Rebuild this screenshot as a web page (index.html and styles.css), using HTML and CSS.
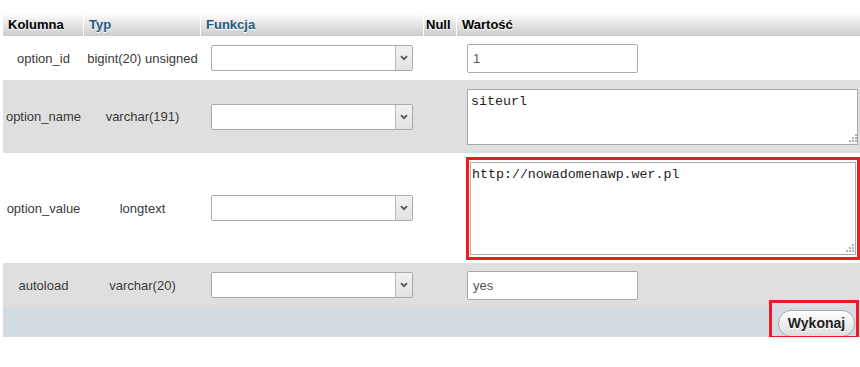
FILE: index.html
```html
<!DOCTYPE html>
<html lang="pl">
<head>
    <meta charset="UTF-8">
    <title>Edycja wiersza</title>
    <link rel="stylesheet" href="styles.css">
</head>
<body>
    <form class="insert-form">
        <table class="insert-table">
            <colgroup>
                <col class="col-name">
                <col class="col-type">
                <col class="col-func">
                <col class="col-null">
                <col class="col-value">
            </colgroup>
            <thead>
                <tr>
                    <th>Kolumna</th>
                    <th><a href="#">Typ</a></th>
                    <th><a href="#">Funkcja</a></th>
                    <th class="th-null">Null</th>
                    <th>Wartość</th>
                </tr>
            </thead>
            <tbody>
                <tr class="row-short">
                    <td class="name">option_id</td>
                    <td class="type">bigint(20) unsigned</td>
                    <td class="func">
                        <div class="fake-select">
                            <span class="fake-select-value"></span>
                            <span class="fake-select-arrow">
                                <svg width="8" height="6" viewBox="0 0 8 6"><path d="M1 1.2 L4 4.2 L7 1.2" fill="none" stroke="#555" stroke-width="1.8"/></svg>
                            </span>
                        </div>
                    </td>
                    <td></td>
                    <td class="value"><input type="text" class="text-input" value="1"></td>
                </tr>
                <tr class="even row-mid">
                    <td class="name">option_name</td>
                    <td class="type">varchar(191)</td>
                    <td class="func">
                        <div class="fake-select">
                            <span class="fake-select-value"></span>
                            <span class="fake-select-arrow">
                                <svg width="8" height="6" viewBox="0 0 8 6"><path d="M1 1.2 L4 4.2 L7 1.2" fill="none" stroke="#555" stroke-width="1.8"/></svg>
                            </span>
                        </div>
                    </td>
                    <td></td>
                    <td class="value">
                        <div class="area-wrap">
                            <textarea class="text-area area-small">siteurl</textarea>
                            <svg class="grip" width="8" height="8" viewBox="0 0 8 8"><rect x="6" y="0" width="2" height="2"/><rect x="3" y="3" width="2" height="2"/><rect x="6" y="3" width="2" height="2"/><rect x="0" y="6" width="2" height="2"/><rect x="3" y="6" width="2" height="2"/><rect x="6" y="6" width="2" height="2"/></svg>
                        </div>
                    </td>
                </tr>
                <tr class="row-tall">
                    <td class="name">option_value</td>
                    <td class="type">longtext</td>
                    <td class="func">
                        <div class="fake-select">
                            <span class="fake-select-value"></span>
                            <span class="fake-select-arrow">
                                <svg width="8" height="6" viewBox="0 0 8 6"><path d="M1 1.2 L4 4.2 L7 1.2" fill="none" stroke="#555" stroke-width="1.8"/></svg>
                            </span>
                        </div>
                    </td>
                    <td></td>
                    <td class="value value-marked">
                        <div class="marked">
                            <div class="area-wrap">
                                <textarea class="text-area area-big">http://nowadomenawp.wer.pl</textarea>
                                <svg class="grip" width="8" height="8" viewBox="0 0 8 8"><rect x="6" y="0" width="2" height="2"/><rect x="3" y="3" width="2" height="2"/><rect x="6" y="3" width="2" height="2"/><rect x="0" y="6" width="2" height="2"/><rect x="3" y="6" width="2" height="2"/><rect x="6" y="6" width="2" height="2"/></svg>
                            </div>
                        </div>
                    </td>
                </tr>
                <tr class="even row-short">
                    <td class="name">autoload</td>
                    <td class="type">varchar(20)</td>
                    <td class="func">
                        <div class="fake-select">
                            <span class="fake-select-value"></span>
                            <span class="fake-select-arrow">
                                <svg width="8" height="6" viewBox="0 0 8 6"><path d="M1 1.2 L4 4.2 L7 1.2" fill="none" stroke="#555" stroke-width="1.8"/></svg>
                            </span>
                        </div>
                    </td>
                    <td></td>
                    <td class="value"><input type="text" class="text-input" value="yes"></td>
                </tr>
            </tbody>
            <tfoot>
                <tr>
                    <td colspan="5" class="footer">
                        <button type="button" class="go-btn">Wykonaj</button>
                        <span class="mark-box"></span>
                    </td>
                </tr>
            </tfoot>
        </table>
    </form>
</body>
</html>
```

FILE: styles.css
```css
body {
    margin: 0;
    font-family: 'Liberation Sans', Arial, sans-serif;
    font-size: 13px;
    color: #3a3a3a;
    background: #fff;
}
.insert-form {
    padding: 13px 0 0 3px;
}
.insert-table {
    border-collapse: separate;
    border-spacing: 0;
    table-layout: fixed;
    width: 857px;
}
.col-name { width: 81px; }
.col-type { width: 117px; }
.col-func { width: 223px; }
.col-null { width: 33px; }
.col-value { width: 403px; }

th {
    height: 23px;
    padding: 0 5px;
    text-align: left;
    font-weight: bold;
    color: #000;
    background: linear-gradient(#fff, #ccc);
    border-right: 1px solid #fff;
    text-shadow: 0 1px 0 #fff;
    box-sizing: border-box;
}
th:last-child {
    border-right: none;
}
th.th-null {
    padding: 0 2px;
}
th a {
    color: #235a81;
    text-decoration: none;
}
td {
    padding: 0;
    vertical-align: middle;
}
tr.even td {
    background: #dfdfdf;
}
.row-short { height: 44px; }
.row-mid { height: 73px; }
.row-tall { height: 110px; }

.name, .type {
    text-align: center;
    white-space: nowrap;
}
.func {
    padding-left: 10px;
}
.fake-select {
    display: flex;
    width: 202px;
    height: 26px;
    box-sizing: border-box;
    border: 1px solid #aaa;
    border-radius: 2px;
    background: #fff;
}
.fake-select-value {
    flex: 1;
}
.fake-select-arrow {
    width: 16px;
    display: flex;
    align-items: center;
    justify-content: center;
    border-left: 1px solid #bbb;
    background: linear-gradient(#f2f2f2, #e2e2e2);
}
.value {
    padding-left: 10px;
}
.text-input {
    display: block;
    width: 171px;
    height: 29px;
    box-sizing: border-box;
    margin: 0;
    padding: 0 5px;
    border: 1px solid #aaa;
    border-radius: 2px;
    font-family: 'Liberation Sans', Arial, sans-serif;
    font-size: 13px;
    color: #555;
}
.area-wrap {
    position: relative;
    display: block;
}
.text-area {
    display: block;
    margin: 0;
    box-sizing: border-box;
    padding: 4px 3px;
    border: 1px solid #aaa;
    font-family: 'Liberation Mono', 'Courier New', monospace;
    font-size: 13.3px;
    line-height: 15px;
    color: #222;
    background: #fff;
    resize: none;
}
.area-small {
    width: 391px;
    height: 56px;
}
.value-marked {
    padding-left: 9px;
}
.marked {
    width: 394px;
    box-sizing: border-box;
    border: 3px solid #ed1c24;
    padding: 2px 0 2px 1px;
}
.area-big {
    width: 386px;
    height: 93px;
    padding-left: 1px;
}
.grip {
    position: absolute;
    right: 3px;
    bottom: 3px;
    fill: #b0b0b0;
}
.footer {
    position: relative;
    height: 30px;
    padding: 0 5px 0 0;
    text-align: right;
    background: #d3dce3;
}
.go-btn {
    width: 77px;
    height: 27px;
    margin-top: 2px;
    vertical-align: top;
    border: 1px solid #aaa;
    border-radius: 13px;
    background: linear-gradient(#fff, #ddd);
    font-family: 'Liberation Sans', Arial, sans-serif;
    font-size: 14px;
    font-weight: bold;
    color: #222;
    text-shadow: 0 1px 0 #fff;
    cursor: pointer;
}
.mark-box {
    position: absolute;
    top: -7px;
    right: 1px;
    width: 84px;
    height: 33px;
    border: 3px solid #ed1c24;
}
```
